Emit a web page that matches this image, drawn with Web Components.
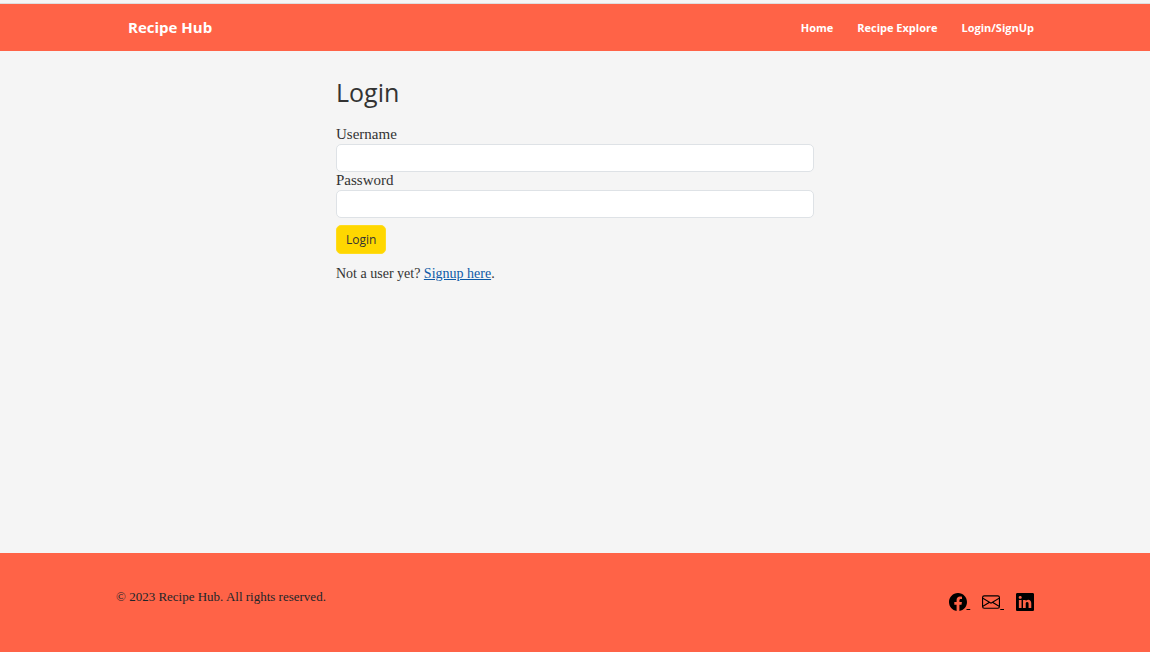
<!DOCTYPE html>
<html lang="en">
<head>
<meta charset="utf-8">
<title>Recipe Hub</title>
<style>
:root{--tomato:#ff6347;--gold:#ffd700;--ink:#333;--sans:"Open Sans","Noto Sans",sans-serif;--serif:"Liberation Serif",serif;--page:918px}
body{margin:0;background:#f5f5f5;color:var(--ink);font:15px/18px var(--serif)}
</style>
</head>
<body>
<recipe-app></recipe-app>
<script>
const define = (name, html) => customElements.define(name, class extends HTMLElement {
  constructor() {
    super();
    const t = document.createElement('template');
    t.innerHTML = '<style>*{box-sizing:border-box}</style>' + html;
    this.attachShadow({mode: 'open'}).append(t.content.cloneNode(true));
  }
});

define('nav-link', `
<style>
:host{display:block}
a{display:block;color:#fff;text-decoration:none;font:bold 11px/18px var(--sans)}
</style>
<a href="#"><slot></slot></a>`);

define('site-header', `
<style>
:host{display:block;background:var(--tomato);border-top:1px solid #dedede}
.bar{max-width:var(--page);margin:0 auto;padding:12px 0 12px 12px;display:flex;align-items:center;justify-content:space-between}
.brand{color:#fff;text-decoration:none;font:bold 15px/23px var(--sans)}
nav{display:flex;gap:24px}
</style>
<div class="bar">
  <a class="brand" href="#">Recipe Hub</a>
  <nav><nav-link>Home</nav-link><nav-link>Recipe Explore</nav-link><nav-link>Login/SignUp</nav-link></nav>
</div>`);

define('login-form', `
<style>
:host{display:block;max-width:478px;margin:0 auto;padding:25px 0}
h1{margin:0 0 18px;font:25px/32px var(--sans)}
label{display:block;line-height:16px;padding-bottom:2px}
input{display:block;width:100%;height:28px;padding:4px 9px;border:1px solid #dee2e6;border-radius:5px;background:#fff;font:inherit;color:inherit}
button{display:block;margin:7px 0 11px;height:29px;padding:0 9px;border:1px solid #ffdc1e;border-radius:5px;background:var(--gold);color:var(--ink);font:12px/18px var(--sans)}
p{margin:0;font-size:14px}
a{color:#0d5aa7}
</style>
<form>
  <h1>Login</h1>
  <label for="user">Username</label><input id="user" type="text">
  <label for="pass">Password</label><input id="pass" type="password">
  <button type="button">Login</button>
  <p>Not a user yet? <a href="#">Signup here</a>.</p>
</form>`);

define('site-footer', `
<style>
:host{display:block;background:var(--tomato)}
.bar{max-width:var(--page);margin:0 auto;padding:35px 0 37px;display:flex;justify-content:space-between;align-items:flex-start}
p{margin:0;font-size:13px;line-height:18px;color:#212529}
.social{display:flex;gap:12px;padding-top:3px;line-height:24px}
a{color:#000}
svg{width:18px;height:18px;fill:currentColor;vertical-align:-3px}
</style>
<div class="bar">
  <p>© 2023 Recipe Hub. All rights reserved.</p>
  <div class="social">
    <a href="#" aria-label="Facebook"><svg viewBox="0 0 16 16"><path d="M16 8.049c0-4.446-3.582-8.05-8-8.05C3.58 0-.002 3.603-.002 8.05c0 4.017 2.926 7.347 6.75 7.951v-5.625h-2.03V8.05H6.75V6.275c0-2.017 1.195-3.131 3.022-3.131.876 0 1.791.157 1.791.157v1.98h-1.009c-.993 0-1.303.621-1.303 1.258v1.51h2.218l-.354 2.326H9.25V16c3.824-.604 6.75-3.934 6.75-7.951"/></svg>&nbsp;</a>
    <a href="#" aria-label="Email"><svg viewBox="0 0 16 16"><path d="M0 4a2 2 0 0 1 2-2h12a2 2 0 0 1 2 2v8a2 2 0 0 1-2 2H2a2 2 0 0 1-2-2zm2-1a1 1 0 0 0-1 1v.217l7 4.2 7-4.2V4a1 1 0 0 0-1-1zm13 2.383-4.708 2.825L15 11.105zm-.034 6.876-5.64-3.471L8 9.583l-1.326-.795-5.64 3.47A1 1 0 0 0 2 13h12a1 1 0 0 0 .966-.741M1 11.105l4.708-2.897L1 5.383z"/></svg>&nbsp;</a>
    <a href="#" aria-label="LinkedIn"><svg viewBox="0 0 16 16"><path d="M0 1.146C0 .513.526 0 1.175 0h13.65C15.474 0 16 .513 16 1.146v13.708c0 .633-.526 1.146-1.175 1.146H1.175C.526 16 0 15.487 0 14.854zm4.943 12.248V6.169H2.542v7.225zm-1.2-8.212c.837 0 1.358-.554 1.358-1.248-.015-.709-.52-1.248-1.342-1.248S2.4 3.226 2.4 3.934c0 .694.521 1.248 1.327 1.248zm4.908 8.212V9.359c0-.216.016-.432.08-.586.173-.431.568-.878 1.232-.878.869 0 1.216.662 1.216 1.634v3.865h2.401V9.25c0-2.22-1.184-3.252-2.764-3.252-1.274 0-1.845.7-2.165 1.193v.025h-.016l.016-.025V6.169h-2.4c.03.678 0 7.225 0 7.225z"/></svg></a>
  </div>
</div>`);

define('recipe-app', `
<style>
:host{display:flex;flex-direction:column;min-height:100vh;padding-top:3px;box-sizing:border-box}
main{flex:1}
</style>
<site-header></site-header>
<main><login-form></login-form></main>
<site-footer></site-footer>`);
</script>
</body>
</html>
